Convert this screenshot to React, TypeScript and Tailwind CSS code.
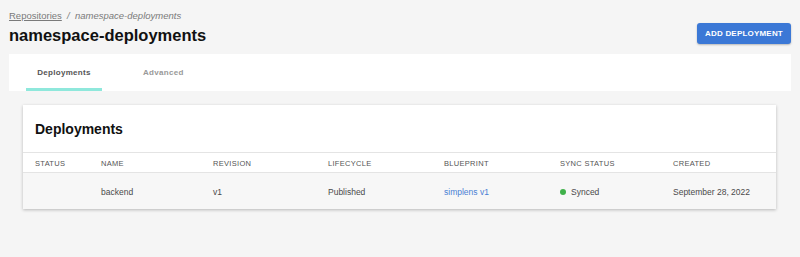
const columns = ['Status', 'Name', 'Revision', 'Lifecycle', 'Blueprint', 'Sync status', 'Created']

const gridCols = 'grid grid-cols-[66px_112px_115px_116px_116px_113px_1fr] pl-3'

export default function App() {
  return (
    <div className="min-h-[257px] bg-[#f5f5f5] font-['Liberation_Sans',Arial,sans-serif]">
      <div className="flex items-start justify-between px-[9px] pt-[10px]">
        <div>
          <div className="text-[9.5px] leading-[12px] text-[#7a7a7a]">
            <span className="underline">Repositories</span>
            <span className="italic">&nbsp; / &nbsp;namespace-deployments</span>
          </div>
          <h1 className="mt-[3px] text-[16.5px] leading-[20px] font-bold text-[#111]">
            namespace-deployments
          </h1>
        </div>
        <button
          type="button"
          className="mt-[13px] h-[21px] w-[94px] rounded-[3px] bg-[#3b78d6] text-[8px] font-bold tracking-[0.2px] text-white shadow-[0_1px_2px_rgba(0,0,0,0.25)]"
        >
          ADD DEPLOYMENT
        </button>
      </div>

      <div className="mx-[9px] mt-[9px] flex h-[37px] bg-white">
        <div className="ml-[17px] flex w-[76px] flex-col justify-center border-b-[3px] border-[#8fe8dc] pt-[3px] text-center text-[8px] font-bold tracking-[0.3px] text-[#555]">
          Deployments
        </div>
        <div className="ml-[41px] flex flex-col justify-center text-[8px] font-bold tracking-[0.3px] text-[#999]">
          Advanced
        </div>
      </div>

      <div className="mx-[23px] mt-[14px] w-[753px] bg-white shadow-[0_1px_3px_rgba(0,0,0,0.25)]">
        <h2 className="flex h-[47px] items-center px-3 pt-[2px] text-[14px] font-bold text-[#111]">
          Deployments
        </h2>
        <div className={`${gridCols} h-[21px] items-center border-t border-b border-[#e4e4e4] pt-[2px] text-[7.5px] tracking-[0.3px] text-[#555] uppercase`}>
          {columns.map((c) => (
            <div key={c}>{c}</div>
          ))}
        </div>
        <div className={`${gridCols} h-[36px] items-center bg-[#f7f7f7] pt-[2px] text-[8.5px] text-[#4a4a4a]`}>
          <div />
          <div>backend</div>
          <div>v1</div>
          <div>Published</div>
          <div className="text-[#4a7fd4]">simplens v1</div>
          <div className="flex items-center gap-[5px]">
            <span className="h-[6px] w-[6px] rounded-full bg-[#3fb14a]" />
            Synced
          </div>
          <div>September 28, 2022</div>
        </div>
      </div>
    </div>
  )
}
